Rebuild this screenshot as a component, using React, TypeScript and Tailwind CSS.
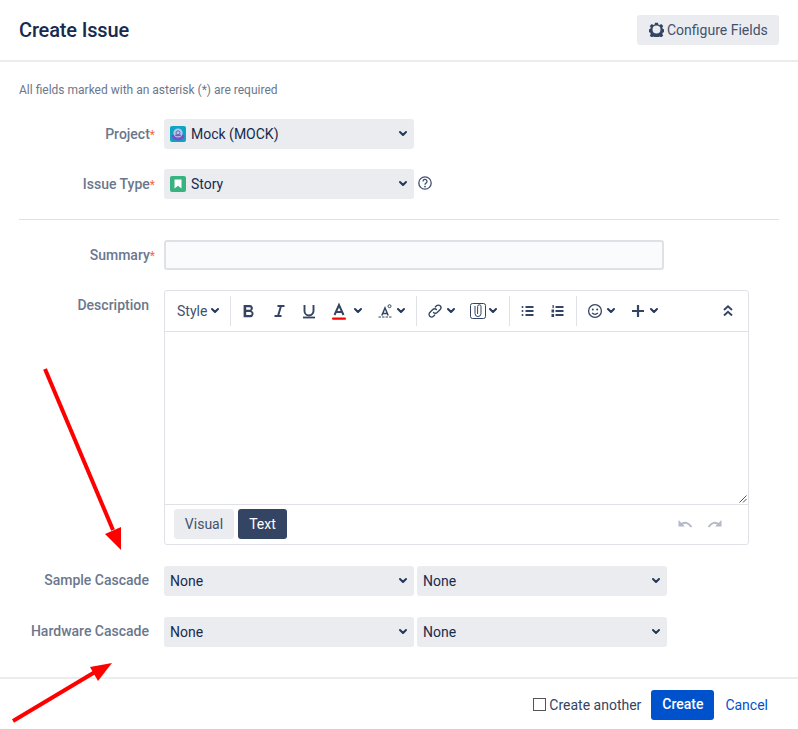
import React from "react";

const Chevron = ({ className = "" }: { className?: string }) => (
  <svg width="10" height="8" viewBox="0 0 10 8" className={`shrink-0 ${className}`}>
    <path d="M2 2 L5 5 L8 2" fill="none" stroke="#253858" strokeWidth="2" strokeLinecap="round" strokeLinejoin="round" />
  </svg>
);

const Select = ({ label, icon }: { label: string; icon?: React.ReactNode }) => (
  <div className="w-[250px] h-[30px] bg-[#ebecf0] rounded-[3px] flex items-center pl-[6px] pr-[6px] shrink-0">
    {icon}
    <span className={`text-[14px] text-[#172b4d] flex-1 ${icon ? "ml-[5px]" : ""}`}>{label}</span>
    <Chevron />
  </div>
);

const Label = ({ text, req, extra = "" }: { text: string; req?: boolean; extra?: string }) => (
  <div className={`w-[155px] shrink-0 text-right text-[14px] font-medium text-[#6b778c] mr-[9px] leading-[20px] ${req ? "" : "pr-[6px]"} ${extra}`}>
    {text}
    {req && <span className="text-[#f0694a] text-[12px] font-normal">*</span>}
  </div>
);

const MockIcon = () => (
  <svg width="16" height="16" viewBox="0 0 16 16" className="shrink-0">
    <rect width="16" height="16" rx="2" fill="#0fa3c4" />
    <path d="M1.5 10 Q2 8 4 8.5 L12 8.5 Q14 8 14.5 10 Q14 14 8 14.5 Q2 14 1.5 10Z" fill="#7a4fc4" />
    <circle cx="8" cy="7" r="4.6" fill="#b9c6ec" />
    <circle cx="8" cy="6.8" r="2" fill="none" stroke="#6a63b8" strokeWidth="1" />
    <rect x="5.2" y="8.6" width="5.6" height="1.6" fill="#6a63b8" />
  </svg>
);

const StoryIcon = () => (
  <svg width="16" height="16" viewBox="0 0 16 16" className="shrink-0">
    <rect width="16" height="16" rx="2" fill="#36b37e" />
    <path d="M4.5 3.5 h7 v9 L8 9.8 L4.5 12.5 Z" fill="#fff" />
  </svg>
);

const Sep = ({ className = "" }: { className?: string }) => <div className={`w-px h-[30px] bg-[#dfe1e6] shrink-0 ${className}`} />;

const Ico = ({ children, className = "" }: { children: React.ReactNode; className?: string }) => (
  <svg width={16} height={16} viewBox="0 0 16 16" className={`shrink-0 overflow-visible ${className}`}>
    {children}
  </svg>
);

const Toolbar = () => (
  <div className="h-[41px] border-b border-[#dfe1e6] flex items-center relative shrink-0">
    <span className="ml-[12px] w-[30px] text-[14px] text-[#42526e]">Style</span>
    <Chevron className="ml-[3px]" />
    <Sep className="ml-[10px]" />
    <Ico className="ml-[10px]">
      <path d="M2.6 2 h6.2 a3.1 3.1 0 0 1 1.7 5.7 a3.4 3.4 0 0 1 -1.3 6.5 H2.6 Z M5.2 4.2 v2.6 h3.3 a1.3 1.3 0 0 0 0 -2.6 Z M5.2 8.9 v3.1 h3.9 a1.55 1.55 0 0 0 0 -3.1 Z" fill="#344563" fillRule="evenodd" />
    </Ico>
    <Ico className="ml-[14px]">
      <path d="M6.5 3 h7 M3.5 13 h7 M10 3 L7 13" stroke="#344563" strokeWidth="2" fill="none" />
    </Ico>
    <Ico className="ml-[14px]">
      <path d="M3.5 2 v6 a4.5 4.5 0 0 0 9 0 V2" stroke="#344563" strokeWidth="1.9" fill="none" />
      <rect x="2" y="13.6" width="12" height="1.8" fill="#344563" />
    </Ico>
    <Ico className="ml-[14px]">
      <path d="M3.5 12 L8 2 L12.5 12 M5 9 h6" stroke="#344563" strokeWidth="2" fill="none" />
      <rect x="1" y="14.5" width="14" height="2.2" rx="1" fill="#ff0000" />
    </Ico>
    <Chevron className="ml-[6px]" />
    <Ico className="ml-[15px]">
      <path d="M3.8 12.5 L7 5 L10.2 12.5 M5 10.5 h4" stroke="#344563" strokeWidth="1.5" fill="none" />
      <path d="M0.5 14 h13.5" stroke="#344563" strokeWidth="1" strokeDasharray="2.5 1" />
      <circle cx="11.5" cy="3.2" r="1.5" fill="none" stroke="#344563" strokeWidth="1" />
    </Ico>
    <Chevron className="ml-[2px]" />
    <Sep className="ml-[10px]" />
    <Ico className="ml-[10px]">
      <path d="M6.5 9.5 a2.6 2.6 0 0 0 3.7 0 l3 -3 a2.6 2.6 0 0 0 -3.7 -3.7 l-1.2 1.2 M9.5 6.5 a2.6 2.6 0 0 0 -3.7 0 l-3 3 a2.6 2.6 0 0 0 3.7 3.7 l1.2 -1.2" stroke="#344563" strokeWidth="1.3" fill="none" strokeLinecap="round" />
    </Ico>
    <Chevron className="ml-[3px]" />
    <Ico className="ml-[14px]">
      <rect x="0.5" y="0.5" width="15" height="15" rx="2" fill="none" stroke="#344563" strokeWidth="1" />
      <path d="M5 3 v7.5 a3 3 0 0 0 6 0 V3.5 a1.7 1.7 0 0 0 -3.4 0 v7.5" stroke="#344563" strokeWidth="1" fill="none" />
    </Ico>
    <Chevron className="ml-[2px]" />
    <Sep className="ml-[11px]" />
    <Ico className="ml-[10px]">
      <g fill="#344563">
        <rect x="1.5" y="3" width="2" height="2" rx="1" />
        <rect x="1.5" y="7" width="2" height="2" rx="1" />
        <rect x="1.5" y="11" width="2" height="2" rx="1" />
        <rect x="5.5" y="3" width="8" height="2" />
        <rect x="5.5" y="7" width="8" height="2" />
        <rect x="5.5" y="11" width="8" height="2" />
      </g>
    </Ico>
    <Ico className="ml-[14px]">
      <g fill="#344563">
        <rect x="2.5" y="2" width="1.3" height="3.2" />
        <rect x="1.5" y="6.5" width="2.6" height="3" />
        <rect x="1.5" y="11" width="2.6" height="3" />
        <rect x="5.5" y="3" width="8" height="2" />
        <rect x="5.5" y="7" width="8" height="2" />
        <rect x="5.5" y="11" width="8" height="2" />
      </g>
    </Ico>
    <Sep className="ml-[10px]" />
    <Ico className="ml-[10px]">
      <circle cx="8" cy="8" r="6.4" fill="none" stroke="#344563" strokeWidth="1.3" />
      <circle cx="5.8" cy="6.6" r="1" fill="#344563" />
      <circle cx="10.2" cy="6.6" r="1" fill="#344563" />
      <path d="M5 10 Q8 12.6 11 10" fill="none" stroke="#344563" strokeWidth="1.2" />
    </Ico>
    <Chevron className="ml-[3px]" />
    <Ico className="ml-[14px]">
      <path d="M8 2 v12 M2 8 h12" stroke="#344563" strokeWidth="2.2" />
    </Ico>
    <Chevron className="ml-[3px]" />
    <svg width="12" height="14" viewBox="0 0 12 14" className="ml-auto mr-[14px] shrink-0">
      <path d="M2 6 L6 2.3 L10 6 M2 11.5 L6 7.8 L10 11.5" fill="none" stroke="#344563" strokeWidth="1.9" />
    </svg>
  </div>
);

export default function App() {
  return (
    <div className="w-[798px] h-[729px] bg-white relative overflow-hidden flex flex-col font-['Roboto',sans-serif] text-[#172b4d]">
      <header className="h-[62px] shrink-0 border-b-2 border-[#ebecf0] flex items-center justify-between pl-[19px] pr-[19px] pb-[1px]">
        <h1 className="text-[20px] font-medium text-[#172b4d] tracking-[-0.008em]">Create Issue</h1>
        <button className="h-[30px] w-[142px] bg-[#ebecf0] rounded-[3px] flex items-center pl-[12px] text-[14px] text-[#42526e]">
          <svg width="15" height="15" viewBox="0 0 24 24" className="mr-[3px] shrink-0">
            <path d="M9.6 1 h4.8 l.5 2.8 2.3 1 2.4-1.6 3.2 3.2-1.6 2.4 1 2.3 2.8.5 v4.8 l-2.8.5-1 2.3 1.6 2.4-3.2 3.2-2.4-1.6-2.3 1-.5 2.8 h-4.8 l-.5-2.8-2.3-1-2.4 1.6-3.2-3.2 1.6-2.4-1-2.3-2.8-.5 v-4.8 l2.8-.5 1-2.3-1.6-2.4 3.2-3.2 2.4 1.6 2.3-1 Z M12 5.6 a6.4 6.4 0 1 0 0 12.8 a6.4 6.4 0 0 0 0 -12.8 Z" fill="#344563" fillRule="evenodd" />
          </svg>
          <span className="pt-[1px]">Configure Fields</span>
        </button>
      </header>

      <main className="flex-1 flex flex-col">
        <p className="text-[12px] text-[#6b778c] ml-[19px] mt-[20px] leading-[16px]">All fields marked with an asterisk (*) are required</p>

        <div className="flex items-center mt-[21px] h-[30px]">
          <Label text="Project" req />
          <Select label="Mock (MOCK)" icon={<MockIcon />} />
        </div>
        <div className="flex items-center mt-[20px] h-[30px]">
          <Label text="Issue Type" req />
          <Select label="Story" icon={<StoryIcon />} />
          <svg width="16" height="16" viewBox="0 0 16 16" className="ml-[3px] mb-[2px]">
            <circle cx="8" cy="8" r="6.2" fill="none" stroke="#42526e" strokeWidth="1.3" />
            <path d="M6 6.4 a2 2 0 1 1 3 1.7 c-.7.4-1 .8-1 1.6" fill="none" stroke="#42526e" strokeWidth="1.3" />
            <circle cx="8" cy="11.6" r="0.9" fill="#42526e" />
          </svg>
        </div>

        <div className="h-px bg-[#dfe1e6] mx-[19px] mt-[20px]" />

        <div className="flex items-center mt-[20px] h-[30px]">
          <Label text="Summary" req />
          <div className="w-[500px] h-[30px] bg-[#fafbfc] border-2 border-[#dfe1e6] rounded-[3px]" />
        </div>

        <div className="flex mt-[20px]">
          <Label text="Description" extra="pt-[5px]" />
          <div className="w-[585px] h-[255px] border border-[#dfe1e6] rounded-[3px] flex flex-col">
            <Toolbar />
            <div className="flex-1 border-b border-[#dfe1e6] relative">
              <svg width="8" height="8" viewBox="0 0 8 8" className="absolute right-[1px] bottom-[1px]">
                <path d="M0.5 7.5 L7.5 0.5 M4 7.5 L7.5 4" stroke="#555" strokeWidth="1" fill="none" />
              </svg>
            </div>
            <div className="h-[39px] shrink-0 flex items-center pl-[9px] pr-[25px] pb-[1px]">
              <div className="h-[30px] w-[60px] bg-[#ebecf0] rounded-[3px] flex items-center justify-center text-[14px] text-[#42526e]">Visual</div>
              <div className="h-[30px] w-[49px] ml-[4px] bg-[#344563] rounded-[3px] flex items-center justify-center text-[14px] text-white">Text</div>
              <div className="ml-auto flex items-center gap-[14px]">
                <svg width="16" height="11" viewBox="0 0 16 11">
                  <path d="M1.5 1 v6.5 h6.5 Z" fill="#b3bac5" />
                  <path d="M4 5.5 Q9.5 1 14.5 8" fill="none" stroke="#b3bac5" strokeWidth="2" />
                </svg>
                <svg width="16" height="11" viewBox="0 0 16 11">
                  <path d="M14.5 1 v6.5 h-6.5 Z" fill="#b3bac5" />
                  <path d="M12 5.5 Q6.5 1 1.5 8" fill="none" stroke="#b3bac5" strokeWidth="2" />
                </svg>
              </div>
            </div>
          </div>
        </div>

        <div className="flex items-center mt-[21px] h-[30px]">
          <Label text="Sample Cascade" extra="mb-[2px]" />
          <Select label="None" />
          <div className="ml-[3px]"><Select label="None" /></div>
        </div>
        <div className="flex items-center mt-[21px] h-[30px]">
          <Label text="Hardware Cascade" extra="mb-[2px]" />
          <Select label="None" />
          <div className="ml-[3px]"><Select label="None" /></div>
        </div>
      </main>

      <footer className="h-[52px] shrink-0 border-t-2 border-[#ebecf0] flex items-center justify-end pt-[2px]">
        <span className="w-[13px] h-[13px] border border-[#555] shrink-0 mb-[2px]" />
        <span className="ml-[3px] text-[14px] text-[#344563]">Create another</span>
        <button className="ml-[10px] w-[63px] h-[30px] bg-[#0052cc] rounded-[3px] text-white text-[14px] font-medium pb-[1px]">Create</button>
        <a className="ml-[11px] mr-[30px] text-[14px] text-[#0052cc]">Cancel</a>
      </footer>

      <svg width="798" height="729" viewBox="0 0 798 729" className="absolute inset-0 pointer-events-none">
        <path d="M45 369 L113 530" stroke="#ff0000" strokeWidth="4" />
        <path d="M105 534 L121 527 L121 550 Z" fill="#ff0000" />
        <path d="M13 721 L95 672" stroke="#ff0000" strokeWidth="4" />
        <path d="M90 667 L112 663 L98 681 Z" fill="#ff0000" />
      </svg>
    </div>
  );
}
